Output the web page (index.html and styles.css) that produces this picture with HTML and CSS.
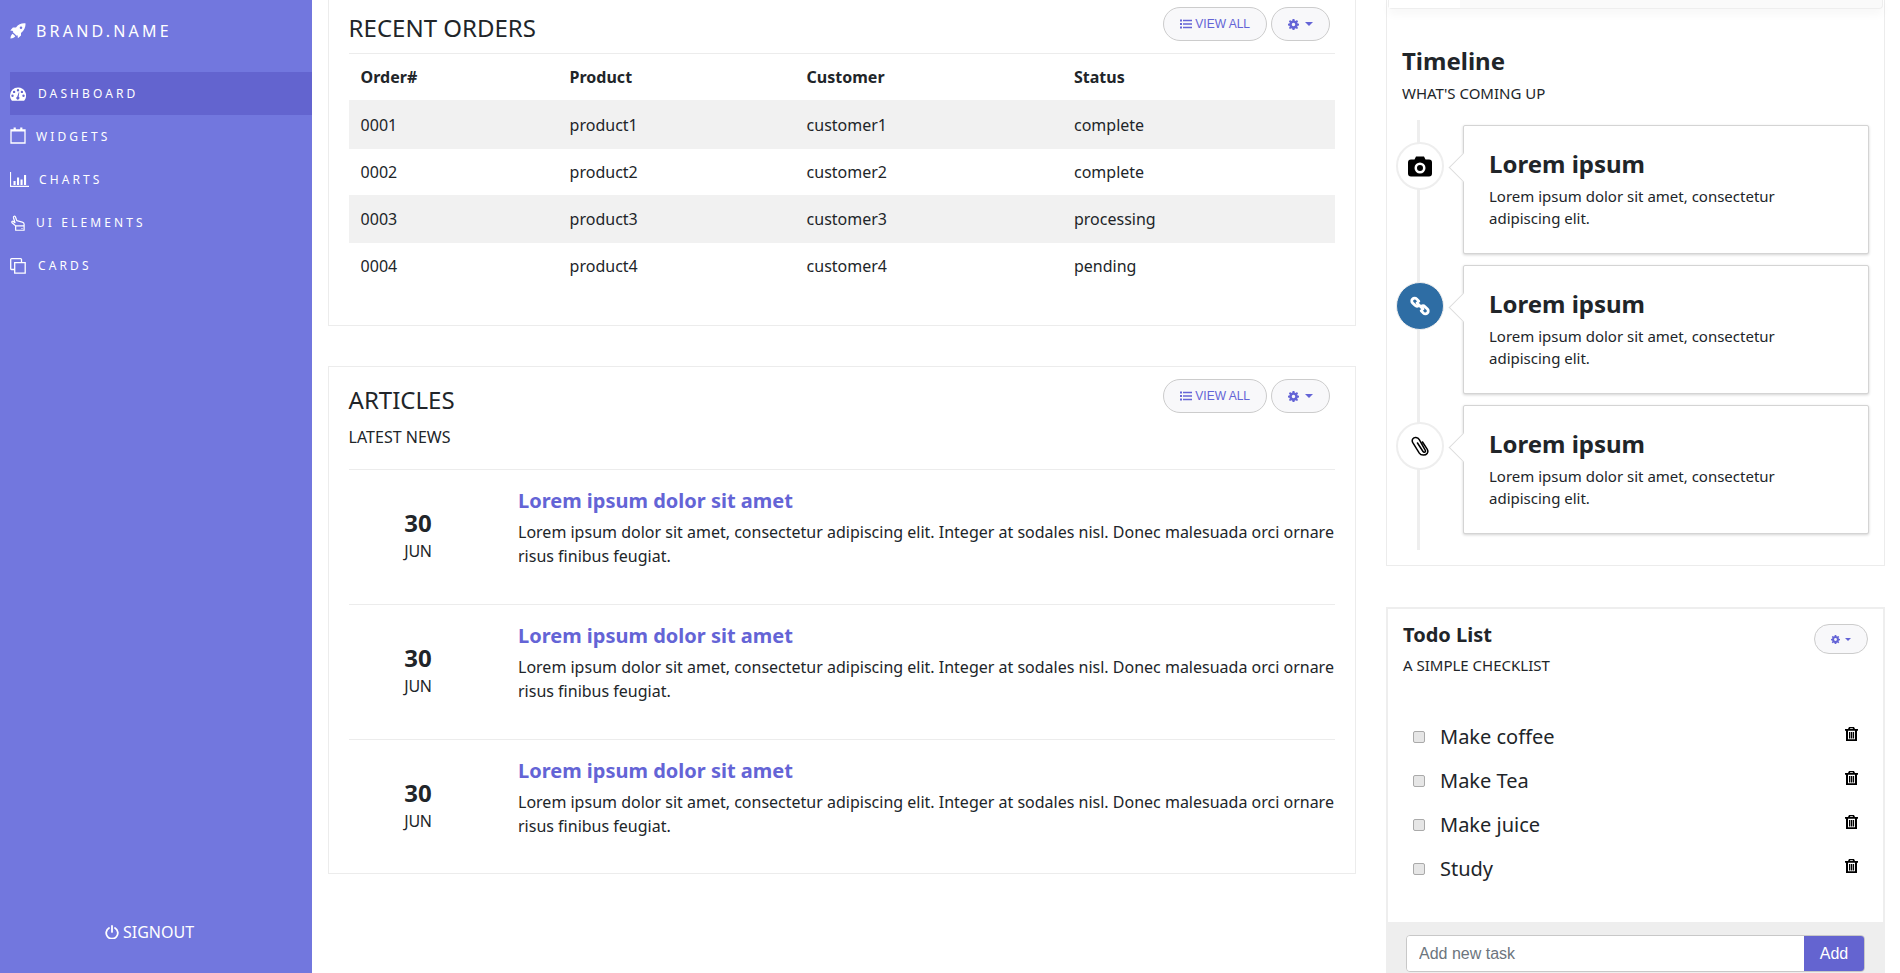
FILE: index.html
```html
<!DOCTYPE html>
<html lang="en">
<head>
  <meta charset="UTF-8" />
  <meta name="viewport" content="width=device-width, initial-scale=1" />
  <title>Dashboard</title>
  <link rel="stylesheet" href="styles.css">
</head>

<body>
  <svg class="icon-defs" aria-hidden="true">
    <symbol id="i-rocket" viewBox="0 0 16 16"><path d="M15.6.4c-4-.4-7.2 1-9.6 4.100H2.900L.3 7.600l3 .3-.6 1 3.900 3.900 1-.6.3 3 3.100-2.600V9.900c3.200-2.400 4.500-5.500 4.600-9.500zM11 3.400a1.300 1.300 0 1 1 0 2.600 1.300 1.300 0 0 1 0-2.600zM2.700 10.700C1.400 11.300.700 13 .4 15.600c2.600-.3 4.300-1 4.900-2.300z"/></symbol>
    <symbol id="i-gauge" viewBox="0 0 16 14"><path fill-rule="evenodd" d="M8 .5a8 8 0 0 0-8 8c0 2 .7 3.800 1.900 5.200h12.200A8 8 0 0 0 8 .5zM8 2a1.200 1.200 0 1 1 0 2.400A1.200 1.200 0 0 1 8 2zM4.100 3.700a1.200 1.200 0 1 1 0 2.400 1.200 1.200 0 0 1 0-2.400zm7.800 0a1.200 1.200 0 1 1 0 2.400 1.200 1.200 0 0 1 0-2.400zM2.500 7.500a1.200 1.200 0 1 1 0 2.400 1.200 1.200 0 0 1 0-2.400zm11 0a1.200 1.200 0 1 1 0 2.400 1.200 1.200 0 0 1 0-2.400zM8.800 5.200l.5.2-.6 4.400a1.500 1.500 0 1 1-1.500-.1z"/></symbol>
    <symbol id="i-calendar" viewBox="0 0 16 17"><path fill="none" stroke="currentColor" stroke-width="1.300" d="M1 3h14v13H1z"/><path d="M3.600.5h2.200v3.500H3.600zM10.200.5h2.200v3.500h-2.200zM1 3h14v1.600H1z"/></symbol>
    <symbol id="i-chart" viewBox="0 0 19 15"><path d="M0 0h1.100v13.700h17.900V15H0zM3.500 9h2.100v4H3.500zM7 5.500h2.100V13H7zM10.500 7.500h2.100V13h-2.100zM14 3h2.100v10H14z"/></symbol>
    <symbol id="i-hand" viewBox="0 0 15 17"><path fill="none" stroke="currentColor" stroke-width="1.300" stroke-linejoin="round" d="M5 11.600 1.200 8.200C.3 7.200 1.500 6 2.500 6.800l1.800 1.400-1.600-5.300C2.300 1.300 4.300.6 4.800 2.200l1.400 3.700 5.800 1.600c1.300.4 2 1.200 2 2.300v1.800H5zM5 11.600v4.600h9v-4.600"/><path d="M11 13.700h1.500v1h-1.500z"/></symbol>
    <symbol id="i-clone" viewBox="0 0 16 16"><path fill="none" stroke="currentColor" stroke-width="1.300" d="M4.700 4.700h10.500v10.500H4.700zM11.500 4.500V1.500a.8.8 0 0 0-.8-.8H1.500a.8.8 0 0 0-.8.8v9.200c0 .5.300.8.800.8h3"/></symbol>
    <symbol id="i-power" viewBox="0 0 14 14"><path fill="none" stroke="currentColor" stroke-width="1.800" stroke-linecap="round" d="M4 3a5.800 5.800 0 1 0 6 0M7 .9v6"/></symbol>
    <symbol id="i-list" viewBox="0 0 12 10"><path d="M0 .5h2v2H0zM0 4h2v2H0zM0 7.500h2v2H0zM3 .8h9v1.400H3zM3 4.300h9v1.400H3zM3 7.800h9v1.400H3z"/></symbol>
    <symbol id="i-cog" viewBox="0 0 12 12"><path fill-rule="evenodd" d="M5 0h2l.3 1.600 1.100.5L9.800 1.200 11 2.600l-1 1.200.5 1.200 1.500.2v1.800l-1.500.3-.5 1.100 1 1.300-1.200 1.300-1.400-.9-1.100.5L7 12H5l-.3-1.400-1.100-.5-1.400.9L1 9.700l1-1.300-.5-1.100L0 7V5.200L1.500 5l.5-1.200-1-1.200 1.200-1.400 1.400.9 1.100-.5zM6 4.100a1.900 1.900 0 1 0 0 3.800 1.900 1.900 0 0 0 0-3.800z"/></symbol>
    <symbol id="i-camera" viewBox="0 0 24 22"><path fill-rule="evenodd" d="M8 1.500h8l1.500 3H21a3 3 0 0 1 3 3v11a3 3 0 0 1-3 3H3a3 3 0 0 1-3-3v-11a3 3 0 0 1 3-3h3.500zM12 7.500a5.500 5.500 0 1 0 0 11 5.500 5.500 0 0 0 0-11zm0 2.500a3 3 0 1 1 0 6 3 3 0 0 1 0-6z"/></symbol>
    <symbol id="i-chain" viewBox="0 0 20 20"><path fill="none" stroke="currentColor" stroke-width="2.800" stroke-linecap="round" d="M8.800 5.200 6.600 2.900a2.800 2.800 0 0 0-4 0 2.800 2.800 0 0 0 0 4L5 9.300a2.800 2.800 0 0 0 3.800.2M11.200 14.800l2.200 2.300a2.800 2.800 0 0 0 4 0 2.800 2.800 0 0 0 0-4L15 10.700a2.800 2.800 0 0 0-3.800-.2M7 7l6 6"/></symbol>
    <symbol id="i-clip" viewBox="0 0 18 20"><path fill="none" stroke="currentColor" stroke-width="1.500" stroke-linecap="round" d="M6.500 7 12 15.500c1 1.500 3 .6 2.300-1.200L8.300 3.700C6.800 1 3 1 1.800 2.800c-1 1.500-.6 2.800 0 3.900l6.500 10.500c1.700 2.500 6.200 2.500 7.800.3 1-1.400 1-2.800.2-4.200L11.500 6"/></symbol>
    <symbol id="i-trash" viewBox="0 0 13 14"><path fill-rule="evenodd" d="M4 0h5l1 2h3v1.700h-1V14H1V3.700H0V2h3zM5.300 1.300 5 2h3l-.3-.7zM3 3.700V12.300h7V3.700zM4 5h1.300v6.500H4zM5.900 5h1.300v6.500H5.900zM7.800 5h1.300v6.500H7.800z"/></symbol>
  </svg>

  <div class="layout">
    <aside class="sidebar">
      <a class="brand" href="#"><svg class="brand-icon"><use href="#i-rocket"/></svg><span>BRAND.NAME</span></a>
      <nav class="side-nav">
        <a class="side-link active" href="#"><svg class="side-icon"><use href="#i-gauge"/></svg><span class="t-dash">DASHBOARD</span></a>
        <a class="side-link" href="#"><svg class="side-icon tall"><use href="#i-calendar"/></svg><span>WIDGETS</span></a>
        <a class="side-link" href="#"><svg class="side-icon wide"><use href="#i-chart"/></svg><span>CHARTS</span></a>
        <a class="side-link" href="#"><svg class="side-icon"><use href="#i-hand"/></svg><span>UI ELEMENTS</span></a>
        <a class="side-link" href="#"><svg class="side-icon"><use href="#i-clone"/></svg><span class="t-dash">CARDS</span></a>
      </nav>
      <a class="signout" href="#"><svg class="power-icon"><use href="#i-power"/></svg>SIGNOUT</a>
    </aside>

    <main class="main-col">
      <section class="card orders">
        <div class="card-head orders-head">
          <h2 class="card-title">RECENT ORDERS</h2>
          <div class="head-btns">
            <button class="pill"><svg class="pill-list"><use href="#i-list"/></svg>VIEW ALL</button>
            <button class="pill pill-cog"><svg class="pill-gear"><use href="#i-cog"/></svg><span class="caret"></span></button>
          </div>
        </div>
        <table class="orders-table">
          <thead>
            <tr><th class="c1">Order#</th><th class="c2">Product</th><th class="c3">Customer</th><th>Status</th></tr>
          </thead>
          <tbody>
            <tr><td>0001</td><td>product1</td><td>customer1</td><td>complete</td></tr>
            <tr><td>0002</td><td>product2</td><td>customer2</td><td>complete</td></tr>
            <tr><td>0003</td><td>product3</td><td>customer3</td><td>processing</td></tr>
            <tr><td>0004</td><td>product4</td><td>customer4</td><td>pending</td></tr>
          </tbody>
        </table>
      </section>

      <section class="card articles">
        <div class="card-head articles-head">
          <div>
            <h2 class="card-title">ARTICLES</h2>
            <p class="card-sub">LATEST NEWS</p>
          </div>
          <div class="head-btns">
            <button class="pill"><svg class="pill-list"><use href="#i-list"/></svg>VIEW ALL</button>
            <button class="pill pill-cog"><svg class="pill-gear"><use href="#i-cog"/></svg><span class="caret"></span></button>
          </div>
        </div>
        <article class="article">
          <div class="article-date"><strong>30</strong><span>JUN</span></div>
          <div class="article-body">
            <a class="article-title" href="#">Lorem ipsum dolor sit amet</a>
            <p>Lorem ipsum dolor sit amet, consectetur adipiscing elit. Integer at sodales nisl. Donec malesuada orci ornare risus finibus feugiat.</p>
          </div>
        </article>
        <article class="article">
          <div class="article-date"><strong>30</strong><span>JUN</span></div>
          <div class="article-body">
            <a class="article-title" href="#">Lorem ipsum dolor sit amet</a>
            <p>Lorem ipsum dolor sit amet, consectetur adipiscing elit. Integer at sodales nisl. Donec malesuada orci ornare risus finibus feugiat.</p>
          </div>
        </article>
        <article class="article">
          <div class="article-date"><strong>30</strong><span>JUN</span></div>
          <div class="article-body">
            <a class="article-title" href="#">Lorem ipsum dolor sit amet</a>
            <p>Lorem ipsum dolor sit amet, consectetur adipiscing elit. Integer at sodales nisl. Donec malesuada orci ornare risus finibus feugiat.</p>
          </div>
        </article>
      </section>
    </main>

    <div class="right-col">
      <section class="timeline-panel">
        <div class="stub"><div class="stub-tab"></div></div>
        <h2 class="timeline-title">Timeline</h2>
        <p class="small-sub">WHAT'S COMING UP</p>
        <div class="timeline">
          <div class="tl-item">
            <div class="tl-badge"><svg class="tl-camera"><use href="#i-camera"/></svg></div>
            <div class="tl-card">
              <h3>Lorem ipsum</h3>
              <p>Lorem ipsum dolor sit amet, consectetur adipiscing elit.</p>
            </div>
          </div>
          <div class="tl-item">
            <div class="tl-badge blue"><svg class="tl-chain"><use href="#i-chain"/></svg></div>
            <div class="tl-card">
              <h3>Lorem ipsum</h3>
              <p>Lorem ipsum dolor sit amet, consectetur adipiscing elit.</p>
            </div>
          </div>
          <div class="tl-item">
            <div class="tl-badge"><svg class="tl-clip"><use href="#i-clip"/></svg></div>
            <div class="tl-card">
              <h3>Lorem ipsum</h3>
              <p>Lorem ipsum dolor sit amet, consectetur adipiscing elit.</p>
            </div>
          </div>
        </div>
      </section>

      <section class="todo">
        <div class="todo-head">
          <div>
            <h2 class="todo-title">Todo List</h2>
            <p class="small-sub">A SIMPLE CHECKLIST</p>
          </div>
          <button class="pill pill-small"><svg class="pill-gear small"><use href="#i-cog"/></svg><span class="caret small"></span></button>
        </div>
        <ul class="todo-list">
          <li><input type="checkbox" /><span>Make coffee</span><svg class="trash"><use href="#i-trash"/></svg></li>
          <li><input type="checkbox" /><span>Make Tea</span><svg class="trash"><use href="#i-trash"/></svg></li>
          <li><input type="checkbox" /><span>Make juice</span><svg class="trash"><use href="#i-trash"/></svg></li>
          <li><input type="checkbox" /><span>Study</span><svg class="trash"><use href="#i-trash"/></svg></li>
        </ul>
        <div class="todo-foot">
          <div class="add-group">
            <input class="add-input" type="text" placeholder="Add new task" />
            <button class="add-btn">Add</button>
          </div>
        </div>
      </section>
    </div>
  </div>
</body>
</html>
```

FILE: styles.css
```css
* { box-sizing: border-box; }

body {
  margin: 0;
  height: 100vh;
  overflow: hidden;
  font-family: "Noto Sans", sans-serif;
  font-size: 16px;
  line-height: 24px;
  color: #212529;
  background: #fff;
}

h2, h3, p, ul { margin: 0; padding: 0; }
a { text-decoration: none; }
svg { fill: currentColor; display: block; }

.icon-defs { width: 0; height: 0; position: absolute; }

.layout {
  display: flex;
  height: 973px;
}

/* sidebar */
.sidebar {
  width: 312px;
  flex-shrink: 0;
  padding-top: 19px;
  padding-left: 10px;
  background: #7277de;
  color: #fff;
  display: flex;
  flex-direction: column;
}

.brand {
  display: flex;
  align-items: center;
  color: #fff;
  font-size: 16px;
  letter-spacing: 3.2px;
  height: 24px;
}

.brand-icon {
  width: 16px;
  height: 16px;
  margin-right: 10px;
}

.side-nav {
  margin-top: 29px;
  display: flex;
  flex-direction: column;
}

.side-link {
  display: flex;
  align-items: center;
  height: 43px;
  color: #fff;
  font-size: 12px;
  letter-spacing: 3.1px;
}

.side-link.active { background: #6364cf; }

.side-icon {
  width: 16px;
  height: 16px;
  margin-right: 10px;
}
.side-icon.tall { height: 17px; margin-top: -3px; }
.side-icon.wide { width: 19px; height: 15px; margin-right: 10px; }

.t-dash { margin-left: 2px; }

.signout {
  margin-top: auto;
  margin-bottom: 29px;
  margin-left: 95px;
  display: flex;
  align-items: center;
  gap: 4px;
  color: #fff;
  font-size: 16px;
}

.power-icon { width: 14px; height: 14px; }

/* main column */
.main-col {
  width: 1028px;
  flex-shrink: 0;
  margin-left: 16px;
  display: flex;
  flex-direction: column;
  gap: 40px;
}

.card {
  border: 1px solid #ececec;
  padding: 0 20px;
  background: #fff;
}

.orders {
  height: 326px;
  border-top: 0;
}

.articles { height: 508px; }

.card-head {
  display: flex;
  justify-content: space-between;
  border-bottom: 1px solid #ececec;
}

.orders-head { height: 54px; padding-top: 7px; }
.articles-head { height: 103px; padding-top: 12px; }

.card-title {
  margin-left: -0.4px;
  font-size: 24px;
  font-weight: 400;
  line-height: 36px;
}
.orders-head .card-title { margin-top: 3px; }
.articles-head .card-title { margin-top: 3px; }

.card-sub {
  margin-top: 7px;
  margin-left: -0.4px;
  font-size: 16px;
}

.head-btns {
  display: flex;
  gap: 4px;
  margin-right: 5px;
}

.pill {
  height: 34px;
  padding: 0 16px;
  display: flex;
  align-items: center;
  gap: 3px;
  background: #f8f8fa;
  border: 1px solid #ccc;
  border-radius: 17px;
  color: #6464d6;
  font-family: "Liberation Sans", sans-serif;
  font-size: 12px;
}

.pill-list { width: 12px; height: 10px; }
.pill-cog { width: 59px; justify-content: center; gap: 6px; padding: 0; }
.pill-gear { width: 11px; height: 11px; }
.pill-gear.small { width: 9px; height: 9px; }

.caret {
  width: 0;
  height: 0;
  border-left: 4px solid transparent;
  border-right: 4px solid transparent;
  border-top: 4px solid #6464d6;
}
.caret.small {
  border-left-width: 3px;
  border-right-width: 3px;
  border-top-width: 3px;
}

.orders-table {
  width: 986px;
  border-collapse: collapse;
  table-layout: fixed;
}

.orders-table th,
.orders-table td {
  padding: 0 12px 0 11.600px;
  text-align: left;
  height: 47px;
}

.orders-table th { font-weight: 700; height: 46px; }
.orders-table tbody tr:nth-child(odd) { background: #f1f1f1; }
.orders-table tbody tr:nth-child(1) td { height: 49px; }
.orders-table tbody tr:nth-child(2) td { height: 46px; }
.orders-table tbody tr:nth-child(3) td { height: 48px; }
.orders-table tbody tr:nth-child(4) td { height: 45px; }

.c1 { width: 209px; }
.c2 { width: 237px; }
.c3 { width: 267.400px; }

.article {
  display: flex;
  height: 135px;
  border-bottom: 1px solid #ececec;
}
.article:last-child { border-bottom: 0; }

.article-date {
  width: 169px;
  flex-shrink: 0;
  padding-top: 35px;
  display: flex;
  flex-direction: column;
  align-items: center;
  padding-right: 31px;
}

.article-date strong { font-size: 24px; line-height: 36px; }
.article-date span { line-height: 20px; letter-spacing: -0.3px; }

.article-body { padding-top: 16px; }

.article-title {
  display: block;
  color: #6464d6;
  font-size: 20px;
  font-weight: 700;
  line-height: 30px;
}

.article-body p { margin-top: 4px; }

/* right column */
.right-col {
  width: 499px;
  flex-shrink: 0;
  margin-left: 30px;
  display: flex;
  flex-direction: column;
  gap: 41px;
}

.timeline-panel {
  height: 566px;
  border: 1px solid #ececec;
  border-top: 0;
  padding: 0 15px;
}

.stub {
  height: 9px;
  margin: 0 -14px;
  background: #fafafa;
  border: 1px solid #eee;
  border-top: 0;
  border-radius: 0 0 4px 4px;
  box-shadow: 0 5px 10px rgba(0, 0, 0, 0.04);
}

.stub-tab {
  width: 71px;
  height: 8px;
  background: #fff;
}

.timeline-title {
  margin-top: 34px;
  font-size: 24px;
  font-weight: 700;
  line-height: 36px;
}

.small-sub {
  margin-top: 4px;
  font-size: 15px;
  line-height: 21px;
}

.timeline {
  position: relative;
  margin-top: 16px;
  margin-left: -6px;
  padding-top: 5px;
  height: 430px;
}

.timeline::before {
  content: "";
  position: absolute;
  left: 21px;
  top: 0;
  bottom: 0;
  width: 3px;
  background: #eee;
}

.tl-item {
  position: relative;
  display: flex;
  align-items: flex-start;
  gap: 19px;
  margin-bottom: 11px;
}

.tl-badge {
  width: 48px;
  height: 48px;
  margin-top: 17px;
  flex-shrink: 0;
  display: flex;
  align-items: center;
  justify-content: center;
  background: #fff;
  border: 2px solid #eee;
  border-radius: 50%;
  color: #000;
}

.tl-badge.blue {
  background: #2e6da4;
  border-width: 1px;
  color: #fff;
}

.tl-camera { width: 24px; height: 22px; }
.tl-chain { width: 20px; height: 20px; }
.tl-clip { width: 18px; height: 20px; }

.tl-card {
  position: relative;
  width: 406px;
  height: 129px;
  padding: 20px 25px;
  background: #fff;
  border: 1px solid #d4d4d4;
  border-radius: 2px;
  box-shadow: 0 1px 3px rgba(0, 0, 0, 0.18);
}

.tl-card::before {
  content: "";
  position: absolute;
  left: -11px;
  top: 31px;
  width: 20px;
  height: 20px;
  background: #fff;
  border-left: 1px solid #ddd;
  border-bottom: 1px solid #ddd;
  transform: rotate(45deg);
}

.tl-card h3 {
  font-size: 24px;
  font-weight: 700;
  line-height: 36px;
}

.tl-card p {
  margin-top: 3px;
  font-size: 15px;
  line-height: 22px;
}

.todo {
  flex: 1;
  display: flex;
  flex-direction: column;
  border: 2px solid #eee;
  border-bottom: 0;
}

.todo-head {
  display: flex;
  justify-content: space-between;
  padding: 13px 15px 0 15px;
}

.todo-title {
  font-size: 20px;
  font-weight: 700;
  line-height: 26px;
}

.todo .small-sub { margin-top: 7px; }

.pill-small {
  width: 54px;
  height: 30px;
  margin-top: 2px;
  padding: 0;
  justify-content: center;
  gap: 5px;
}

.todo-list {
  list-style: none;
  margin-top: 39px;
  padding: 0 15px 0 25px;
}

.todo-list li {
  display: flex;
  align-items: center;
  height: 44px;
  font-size: 20px;
}

.todo-list input {
  appearance: none;
  width: 12px;
  height: 12px;
  margin: 0 15px 0 0;
  background: #e6e6e6;
  border: 1px solid #aaa;
  border-radius: 2px;
}

.trash {
  width: 13px;
  height: 14px;
  margin-left: auto;
  margin-right: 10px;
  margin-top: -7px;
  color: #000;
}

.todo-foot {
  margin-top: auto;
  height: 51px;
  padding: 13px 0 0 18px;
  background: #eee;
}

.add-group {
  display: flex;
  width: 459px;
  height: 37px;
  overflow: hidden;
  border: 1px solid #c8c8c8;
  border-radius: 4px;
}

.add-input {
  flex: 1;
  min-width: 0;
  padding: 0 12px;
  border: 0;
  outline: 0;
  background: #fff;
  font-family: "Liberation Sans", sans-serif;
  font-size: 16px;
}

.add-input::placeholder { color: #6c757d; }

.add-btn {
  width: 60px;
  border: 0;
  background: #6464d0;
  color: #fff;
  font-family: "Liberation Sans", sans-serif;
  font-size: 16px;
}
```
